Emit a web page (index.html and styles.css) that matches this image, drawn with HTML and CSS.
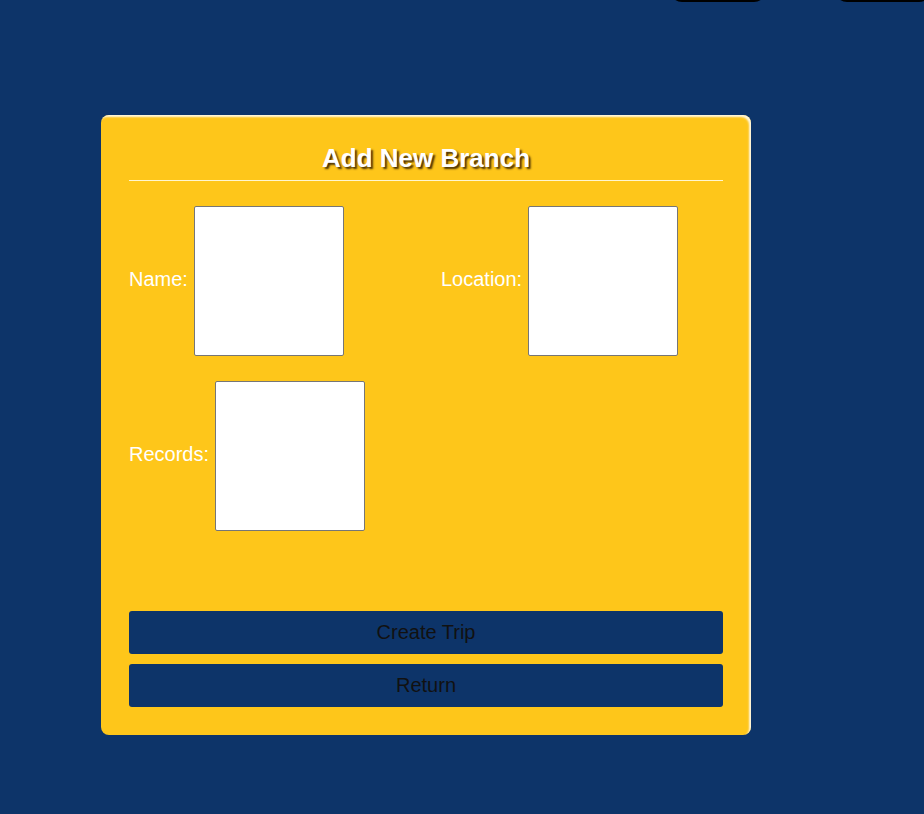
FILE: index.html
```html
<!DOCTYPE html>
<html lang="en">

<head>
    <meta charset="UTF-8">
    <meta name="viewport" content="width=device-width, initial-scale=1.0">
    <title>Add New Branch</title>
    <link rel="stylesheet" href="styles.css">
</head>

<body>
    <nav class="topnav">
        <a class="navbtn" href="#"></a>
        <a class="navbtn" href="#"></a>
    </nav>

    <main class="page">
        <form class="card" onsubmit="return false">
            <h2 class="card-title">Add New Branch</h2>

            <div class="fields">
                <div class="field">
                    <label for="name">Name:</label>
                    <input type="text" id="name">
                </div>
                <div class="field">
                    <label for="location">Location:</label>
                    <input type="text" id="location">
                </div>
                <div class="field">
                    <label for="records">Records:</label>
                    <input type="text" id="records">
                </div>
            </div>

            <div class="actions">
                <button type="submit" class="btn">Create Trip</button>
                <button type="button" class="btn">Return</button>
            </div>
        </form>
    </main>
</body>

</html>
```

FILE: styles.css
```css
html,
body {
    overflow: hidden;
}

body {
    margin: 0;
    background-color: #0d3469;
    font-family: 'Liberation Sans', Arial, sans-serif;
    min-height: 814px;
}

.topnav {
    display: flex;
    gap: 69px;
    padding-left: 670px;
    height: 2px;
}

.navbtn {
    flex: 0 0 96px;
    height: 30px;
    margin-top: -28px;
    background-color: #000;
    border-radius: 12px;
}

.page {
    padding: 113px 0 0 101px;
}

.card {
    width: 650px;
    box-sizing: border-box;
    padding: 28px 28px 28px;
    background-color: #fec61a;
    border-radius: 8px;
    box-shadow: inset -2px 2px 2px rgba(255, 255, 255, 0.85);
}

.card-title {
    margin: 0;
    padding-bottom: 6px;
    border-bottom: 1px solid #fff6d0;
    text-align: center;
    font-size: 26px;
    font-weight: bold;
    color: #fff;
    text-shadow: 2px 2px 2px rgba(40, 20, 0, 0.85);
}

.fields {
    display: grid;
    grid-template-columns: 1fr 1fr;
    column-gap: 30px;
    row-gap: 25px;
    margin-top: 25px;
}

.field {
    display: flex;
    align-items: center;
    gap: 5.6px;
}

.field label {
    padding-bottom: 4px;
    font-size: 20px;
    color: #fff;
}

.field input {
    width: 150px;
    height: 150px;
    box-sizing: border-box;
    border: 1px solid #767676;
    border-radius: 2px;
    background-color: #fff;
}

.actions {
    display: flex;
    flex-direction: column;
    gap: 10px;
    margin-top: 80px;
}

.btn {
    height: 43px;
    border: none;
    border-radius: 3px;
    background-color: #0d3469;
    color: #111;
    font-family: 'Liberation Sans', Arial, sans-serif;
    font-size: 20px;
    cursor: pointer;
}
```
